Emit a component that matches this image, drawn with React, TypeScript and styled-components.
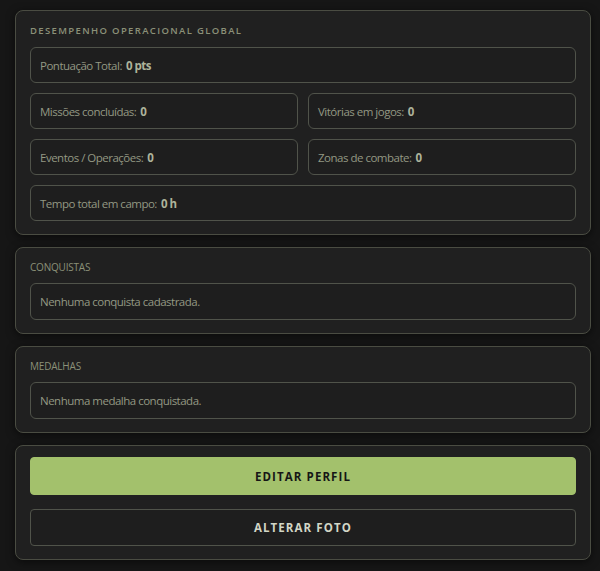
import React from 'react';
import styled, { createGlobalStyle } from 'styled-components';

const GlobalStyle = createGlobalStyle`
  html, body {
    margin: 0;
    background: #161616;
  }
  body {
    font-family: "Open Sans", "Noto Sans", sans-serif;
  }
`;

const Page = styled.div`
  display: flex;
  flex-direction: column;
  gap: 12px;
  padding: 10px 9px 12px 15px;
`;

const Card = styled.section<{ space?: number }>`
  display: flex;
  flex-direction: column;
  gap: ${({ space }) => space ?? 9}px;
  padding: 13px 14px;
  background: #202020;
  border: 1px solid #4a4c42;
  border-radius: 8px;
  box-shadow: 0 2px 8px rgba(0, 0, 0, 0.55);
`;

const Title = styled.h3<{ spaced?: boolean }>`
  margin: 0;
  height: 13px;
  line-height: 13px;
  font-size: ${({ spaced }) => (spaced ? '9.5px' : '10px')};
  font-weight: ${({ spaced }) => (spaced ? 600 : 400)};
  letter-spacing: ${({ spaced }) => (spaced ? '1.35px' : '-0.2px')};
  text-transform: uppercase;
  color: #8b9078;
`;

const Grid = styled.div`
  display: grid;
  grid-template-columns: 1fr 1fr;
  gap: 10px 10px;
`;

const Stat = styled.div<{ wide?: boolean }>`
  grid-column: ${({ wide }) => (wide ? '1 / -1' : 'auto')};
  display: flex;
  align-items: center;
  height: 36px;
  box-sizing: border-box;
  padding: 0 9px;
  border: 1px solid #50534a;
  border-radius: 6px;
  background: #1e1e1e;
  font-size: 11.5px;
  letter-spacing: -0.5px;
  color: #939883;

  b {
    margin-left: 4px;
    font-weight: 700;
    color: #adb39b;
  }
`;

const Empty = styled(Stat)`
  height: 37px;
`;

const Button = styled.button<{ primary?: boolean }>`
  height: ${({ primary }) => (primary ? '38px' : '37px')};
  border-radius: 4px;
  border: 1px solid ${({ primary }) => (primary ? '#a3c16c' : '#50534a')};
  background: ${({ primary }) => (primary ? '#a3c16c' : '#1e1e1e')};
  color: ${({ primary }) => (primary ? '#161616' : '#d2d6c6')};
  font-family: "Open Sans", "Noto Sans", sans-serif;
  font-size: 11.5px;
  font-weight: 700;
  letter-spacing: 1.1px;
  text-transform: uppercase;
  cursor: pointer;
`;

const Buttons = styled(Card)`
  gap: 14px;
  padding-top: 11px;
`;

export default function App() {
  return (
    <>
      <GlobalStyle />
      <Page>
        <Card space={10}>
          <Title spaced>Desempenho Operacional Global</Title>
          <Grid>
            <Stat wide>Pontuação Total:<b>0 pts</b></Stat>
            <Stat>Missões concluídas:<b>0</b></Stat>
            <Stat>Vitórias em jogos:<b>0</b></Stat>
            <Stat>Eventos / Operações:<b>0</b></Stat>
            <Stat>Zonas de combate:<b>0</b></Stat>
            <Stat wide>Tempo total em campo:<b>0 h</b></Stat>
          </Grid>
        </Card>
        <Card>
          <Title>Conquistas</Title>
          <Empty>Nenhuma conquista cadastrada.</Empty>
        </Card>
        <Card>
          <Title>Medalhas</Title>
          <Empty>Nenhuma medalha conquistada.</Empty>
        </Card>
        <Buttons>
          <Button primary>Editar Perfil</Button>
          <Button>Alterar Foto</Button>
        </Buttons>
      </Page>
    </>
  );
}
